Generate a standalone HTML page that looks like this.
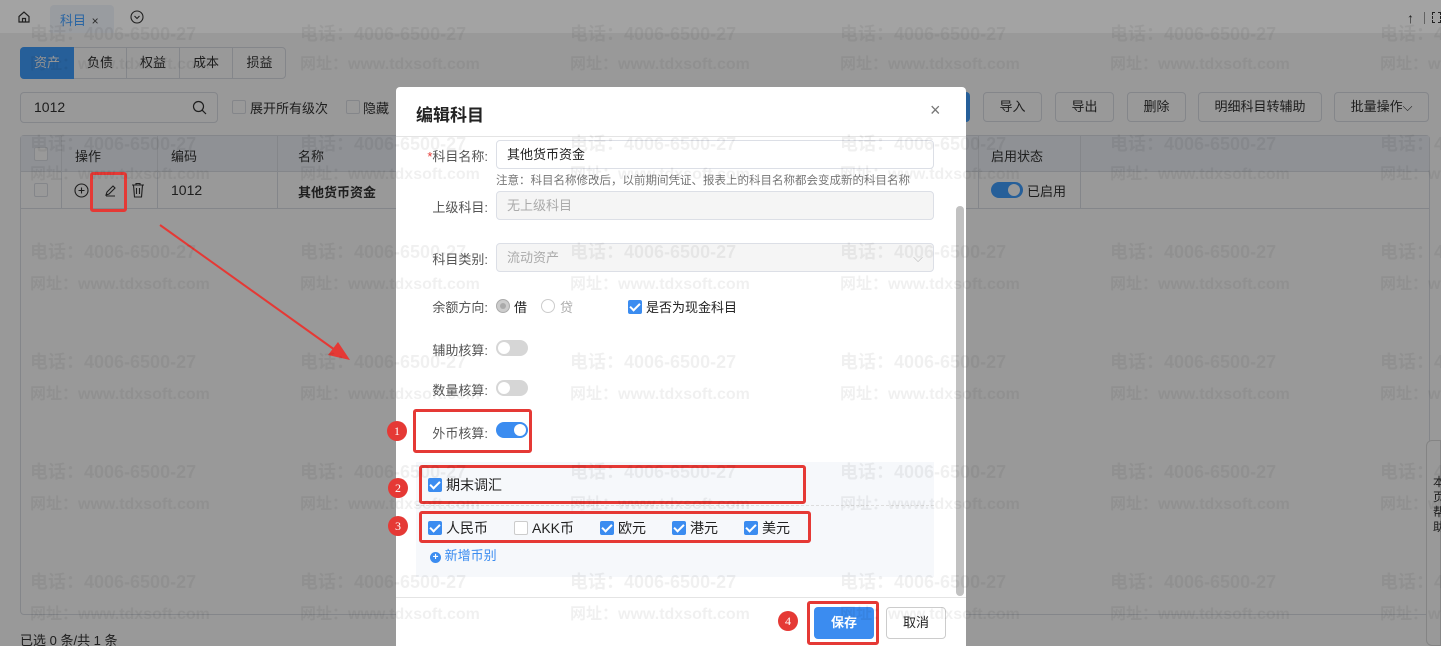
<!DOCTYPE html>
<html><head><meta charset="utf-8"><style>
*{box-sizing:border-box;margin:0;padding:0}
html{background:#fff}
body{width:1441px;height:646px;overflow:hidden;position:relative;background:#fff;font-family:"Liberation Sans","Noto Sans CJK SC",sans-serif;font-size:13px;color:#333}
.a{position:absolute}
.wm{position:absolute;font-weight:bold;font-size:18px;color:rgba(0,0,0,0.06);white-space:nowrap;font-family:"Liberation Sans","Noto Sans CJK SC",sans-serif;z-index:50}
.wm2{font-size:16px}
.btn{position:absolute;top:92px;height:30px;border:1px solid #dcdfe6;border-radius:4px;background:#fff;color:#333;font-size:13px;text-align:center;line-height:28px}
.cb{position:absolute;width:14px;height:14px;border:1px solid #dcdfe6;border-radius:2px;background:#fff}
.mcb{display:inline-block;width:14px;height:14px;border-radius:2px;background:#3b8cf0;position:relative;vertical-align:-2px;margin-right:4px}
.mcb::after{content:"";position:absolute;left:4px;top:1px;width:4px;height:8px;border:solid #fff;border-width:0 2px 2px 0;transform:rotate(45deg)}
.mcb.off{background:#fff;border:1px solid #ccc}.mcb.off::after{display:none}
.lbl{position:absolute;color:#555;font-size:13px;text-align:right}
.inp{position:absolute;left:496px;width:438px;height:29px;border:1px solid #dcdfe6;border-radius:4px;padding-left:10px;line-height:27px;font-size:13px}
.sw{position:absolute;width:32px;height:16px;border-radius:8px;background:#d6d6d6}
.sw::after{content:"";position:absolute;left:2px;top:2px;width:12px;height:12px;border-radius:50%;background:#fff}
.sw.on{background:#3b8cf0}.sw.on::after{left:18px}
.red{position:absolute;border:3px solid #e53935;border-radius:3px;z-index:20}
.num{position:absolute;width:20px;height:20px;border-radius:50%;background:#e53935;color:#fff;font-family:"Liberation Serif",serif;font-size:12px;text-align:center;line-height:20px;z-index:20}
</style></head><body>
<!-- top bar -->
<div class="a" style="left:0;top:0;width:1441px;height:33px;background:#fff"></div>
<div class="a" style="left:50px;top:5px;width:64px;height:28px;background:#f0f4fa;border-radius:4px 4px 0 0"></div>
<svg class="a" style="left:17px;top:10px" width="14" height="14" viewBox="0 0 14 14"><path d="M2 6.5L7 2l5 4.5V12H2z M5.5 12V8.5h3V12" fill="none" stroke="#333" stroke-width="1.2"/></svg>
<div class="a" style="left:60px;top:10px;color:#409eff;font-size:13px">科目 <span style="color:#444;font-size:12px;margin-left:2px">×</span></div>
<svg class="a" style="left:130px;top:10px" width="14" height="14" viewBox="0 0 14 14"><circle cx="7" cy="7" r="6" fill="none" stroke="#333" stroke-width="1.1"/><path d="M4.5 6l2.5 2.5L9.5 6" fill="none" stroke="#333" stroke-width="1.1"/></svg>
<div class="a" style="left:1407px;top:10px;font-size:14px;color:#333">↑</div>
<div class="a" style="left:1424px;top:12px;width:1px;height:12px;background:#999"></div>
<div class="a" style="left:1432px;top:12px;width:9px;height:11px;border:1px dashed #333"></div>

<!-- tabs -->
<div class="a" style="left:20px;top:47px;width:266px;height:32px;border:1px solid #dcdfe6;border-radius:4px;background:#fff"></div>
<div class="a" style="left:20px;top:47px;width:54px;height:32px;background:#409eff;border-radius:4px 0 0 4px;color:#fff;text-align:center;line-height:32px">资产</div>
<div class="a" style="left:74px;top:47px;width:53px;height:32px;border-right:1px solid #dcdfe6;text-align:center;line-height:32px">负债</div>
<div class="a" style="left:127px;top:47px;width:53px;height:32px;border-right:1px solid #dcdfe6;text-align:center;line-height:32px">权益</div>
<div class="a" style="left:180px;top:47px;width:53px;height:32px;border-right:1px solid #dcdfe6;text-align:center;line-height:32px">成本</div>
<div class="a" style="left:233px;top:47px;width:53px;height:32px;text-align:center;line-height:32px">损益</div>

<!-- search -->
<div class="a" style="left:20px;top:92px;width:198px;height:31px;border:1px solid #dcdfe6;border-radius:4px;background:#fff;padding-left:13px;line-height:29px;font-size:14px">1012</div>
<svg class="a" style="left:192px;top:100px" width="15" height="15" viewBox="0 0 15 15"><circle cx="6.5" cy="6.5" r="5" fill="none" stroke="#333" stroke-width="1.2"/><path d="M10.3 10.3L14 14" stroke="#333" stroke-width="1.2"/></svg>
<div class="cb" style="left:232px;top:100px"></div>
<div class="a" style="left:250px;top:98px">展开所有级次</div>
<div class="cb" style="left:346px;top:100px"></div>
<div class="a" style="left:363px;top:98px">隐藏</div>

<div class="a" style="left:955px;top:92px;width:15px;height:30px;background:#409eff;border-radius:0 4px 4px 0"></div>
<div class="btn" style="left:983px;width:59px">导入</div>
<div class="btn" style="left:1055px;width:59px">导出</div>
<div class="btn" style="left:1127px;width:59px">删除</div>
<div class="btn" style="left:1198px;width:124px">明细科目转辅助</div>
<div class="btn" style="left:1334px;width:95px">批量操作⌵</div>

<!-- table -->
<div class="a" style="left:20px;top:135px;width:1410px;height:480px;border:1px solid #dcdfe6;border-radius:4px"></div>
<div class="a" style="left:21px;top:136px;width:1408px;height:36px;background:#eef2f8;border-bottom:1px solid #dcdfe6"></div>
<div class="a" style="left:21px;top:172px;width:1408px;height:37px;border-bottom:1px solid #dcdfe6"></div>
<div class="a" style="left:61px;top:136px;width:1px;height:73px;background:#dcdfe6"></div>
<div class="a" style="left:157px;top:136px;width:1px;height:73px;background:#dcdfe6"></div>
<div class="a" style="left:277px;top:136px;width:1px;height:73px;background:#dcdfe6"></div>
<div class="a" style="left:978px;top:136px;width:1px;height:73px;background:#dcdfe6"></div>
<div class="a" style="left:1080px;top:136px;width:1px;height:73px;background:#dcdfe6"></div>
<div class="cb" style="left:34px;top:147px"></div>
<div class="cb" style="left:34px;top:183px"></div>
<div class="a" style="left:75px;top:146px">操作</div>
<div class="a" style="left:171px;top:146px">编码</div>
<div class="a" style="left:298px;top:146px">名称</div>
<div class="a" style="left:991px;top:146px">启用状态</div>
<svg class="a" style="left:74px;top:183px" width="15" height="15" viewBox="0 0 15 15"><circle cx="7.5" cy="7.5" r="6.5" fill="none" stroke="#333" stroke-width="1.1"/><path d="M7.5 4.5v6M4.5 7.5h6" stroke="#333" stroke-width="1.1"/></svg>
<svg class="a" style="left:103px;top:183px" width="15" height="15" viewBox="0 0 15 15"><path d="M3 12L4 9l6-6 2 2-6 6zM3 13h9" fill="none" stroke="#333" stroke-width="1.1"/></svg>
<svg class="a" style="left:131px;top:182px" width="14" height="16" viewBox="0 0 14 16"><path d="M1 3h12M5 3V1.5h4V3M2.5 3l1 12h7l1-12M5.5 6v6M8.5 6v6" fill="none" stroke="#333" stroke-width="1.1"/></svg>
<div class="a" style="left:171px;top:182px;font-size:14px">1012</div>
<div class="a" style="left:298px;top:182px;font-weight:bold">其他货币资金</div>
<div class="a" style="left:991px;top:182px;width:32px;height:16px;border-radius:8px;background:#409eff"></div>
<div class="a" style="left:1008px;top:184px;width:12px;height:12px;border-radius:50%;background:#fff"></div>
<div class="a" style="left:1027px;top:181px">已启用</div>
<div class="a" style="left:20px;top:630px">已选 0 条/共 1 条</div>

<!-- right side panel -->
<div class="a" style="left:1426px;top:440px;width:15px;height:206px;background:#fff;border-radius:6px 0 0 6px;border:1px solid #ddd"></div>
<div class="a" style="left:1433px;top:475px;width:8px;font-size:12px;line-height:15px">本页帮助</div>

<!-- overlay -->
<div class="a" style="left:0;top:0;width:1441px;height:33px;background:rgba(0,0,0,0.36)"></div>
<div class="a" style="left:0;top:33px;width:1441px;height:613px;background:rgba(0,0,0,0.4)"></div>

<div class="red" style="left:90px;top:172px;width:37px;height:40px"></div>
<!-- red arrow -->
<svg class="a" style="left:0;top:0;z-index:20" width="1441" height="646"><line x1="160" y1="225" x2="335" y2="350" stroke="#e53935" stroke-width="2"/><polygon points="350,360 328,355 338,342" fill="#e53935"/></svg>

<!-- modal -->
<div class="a" style="left:396px;top:87px;width:570px;height:559px;background:#fff;border-radius:4px 4px 0 0"></div>
<div class="a" style="left:416px;top:101px;font-size:17px;font-weight:bold;color:#222">编辑科目</div>
<div class="a" style="left:930px;top:100px;font-size:18px;color:#777">×</div>
<div class="a" style="left:396px;top:136px;width:570px;height:1px;background:#e4e4e4"></div>
<div class="a" style="left:956px;top:206px;width:8px;height:390px;background:#c1c1c1;border-radius:4px"></div>

<div class="lbl" style="left:410px;top:146px;width:78px"><span style="color:#e53935">*</span>科目名称:</div>
<div class="inp" style="top:140px;color:#222">其他货币资金</div>
<div class="a" style="left:496px;top:172px;font-size:11.5px;color:#777">注意：科目名称修改后，以前期间凭证、报表上的科目名称都会变成新的科目名称</div>
<div class="lbl" style="left:410px;top:197px;width:78px">上级科目:</div>
<div class="inp" style="top:191px;background:#f5f5f5;color:#aaa">无上级科目</div>
<div class="lbl" style="left:410px;top:249px;width:78px">科目类别:</div>
<div class="inp" style="top:243px;background:#f5f5f5;color:#aaa">流动资产<span style="position:absolute;right:10px;color:#bbb">⌵</span></div>
<div class="lbl" style="left:410px;top:297px;width:78px">余额方向:</div>
<div class="a" style="left:496px;top:299px;width:14px;height:14px;border-radius:50%;border:1px solid #aaa;background:#ccc"><div style="margin:3px;width:6px;height:6px;border-radius:50%;background:#aaa"></div></div>
<div class="a" style="left:514px;top:297px;color:#222">借</div>
<div class="a" style="left:541px;top:299px;width:14px;height:14px;border-radius:50%;border:1px solid #ccc"></div>
<div class="a" style="left:560px;top:297px;color:#aaa">贷</div>
<div class="a" style="left:628px;top:297px;color:#222"><span class="mcb"></span>是否为现金科目</div>
<div class="lbl" style="left:410px;top:340px;width:78px">辅助核算:</div>
<div class="sw" style="left:496px;top:340px"></div>
<div class="lbl" style="left:410px;top:380px;width:78px">数量核算:</div>
<div class="sw" style="left:496px;top:380px"></div>
<div class="lbl" style="left:410px;top:423px;width:78px">外币核算:</div>
<div class="sw on" style="left:496px;top:422px"></div>
<div class="red" style="left:413px;top:409px;width:119px;height:44px"></div>
<div class="num" style="left:387px;top:421px">1</div>

<div class="a" style="left:416px;top:462px;width:518px;height:115px;background:#f6f8fb"></div>
<div class="a" style="left:416px;top:505px;width:518px;border-top:1px dashed #ddd"></div>
<div class="a" style="left:428px;top:475px;color:#222;font-size:14px"><span class="mcb"></span>期末调汇</div>
<div class="red" style="left:419px;top:465px;width:387px;height:39px"></div>
<div class="num" style="left:388px;top:478px">2</div>
<div class="a" style="left:428px;top:518px;color:#222;white-space:nowrap;font-size:14px"><span class="mcb"></span>人民币<span class="mcb off" style="margin-left:26px"></span>AKK币<span class="mcb" style="margin-left:26px"></span>欧元<span class="mcb" style="margin-left:26px"></span>港元<span class="mcb" style="margin-left:26px"></span>美元</div>
<div class="red" style="left:419px;top:511px;width:392px;height:32px"></div>
<div class="num" style="left:388px;top:516px">3</div>
<div class="a" style="left:430px;top:545px;color:#3b8cf0"><span style="display:inline-block;width:11px;height:11px;border-radius:50%;background:#3b8cf0;color:#fff;font-size:10px;line-height:11px;text-align:center;font-weight:bold">+</span> 新增币别</div>

<div class="a" style="left:396px;top:597px;width:570px;height:1px;background:#e4e4e4"></div>
<div class="a" style="left:814px;top:607px;width:60px;height:32px;background:#3b8cf0;border-radius:4px;color:#fff;text-align:center;line-height:32px;font-size:13px;font-weight:bold">保存</div>
<div class="red" style="left:807px;top:601px;width:72px;height:44px"></div>
<div class="num" style="left:778px;top:611px">4</div>
<div class="a" style="left:886px;top:607px;width:60px;height:32px;border:1px solid #ccc;border-radius:4px;color:#222;text-align:center;line-height:30px">取消</div>

<div id="wms"></div>
<script>
var h='';var xs=[30,300,570,840,1110,1380];var ys=[[32,60],[142,170],[250,280],[360,390],[470,500],[580,610]];
ys.forEach(function(y){xs.forEach(function(x){h+='<div class="wm" style="left:'+x+'px;top:'+(y[0]-12)+'px">电话：4006-6500-27</div><div class="wm wm2" style="left:'+x+'px;top:'+(y[1]-10)+'px">网址：www.tdxsoft.com</div>';});});
document.getElementById('wms').outerHTML=h;
</script>
</body></html>
